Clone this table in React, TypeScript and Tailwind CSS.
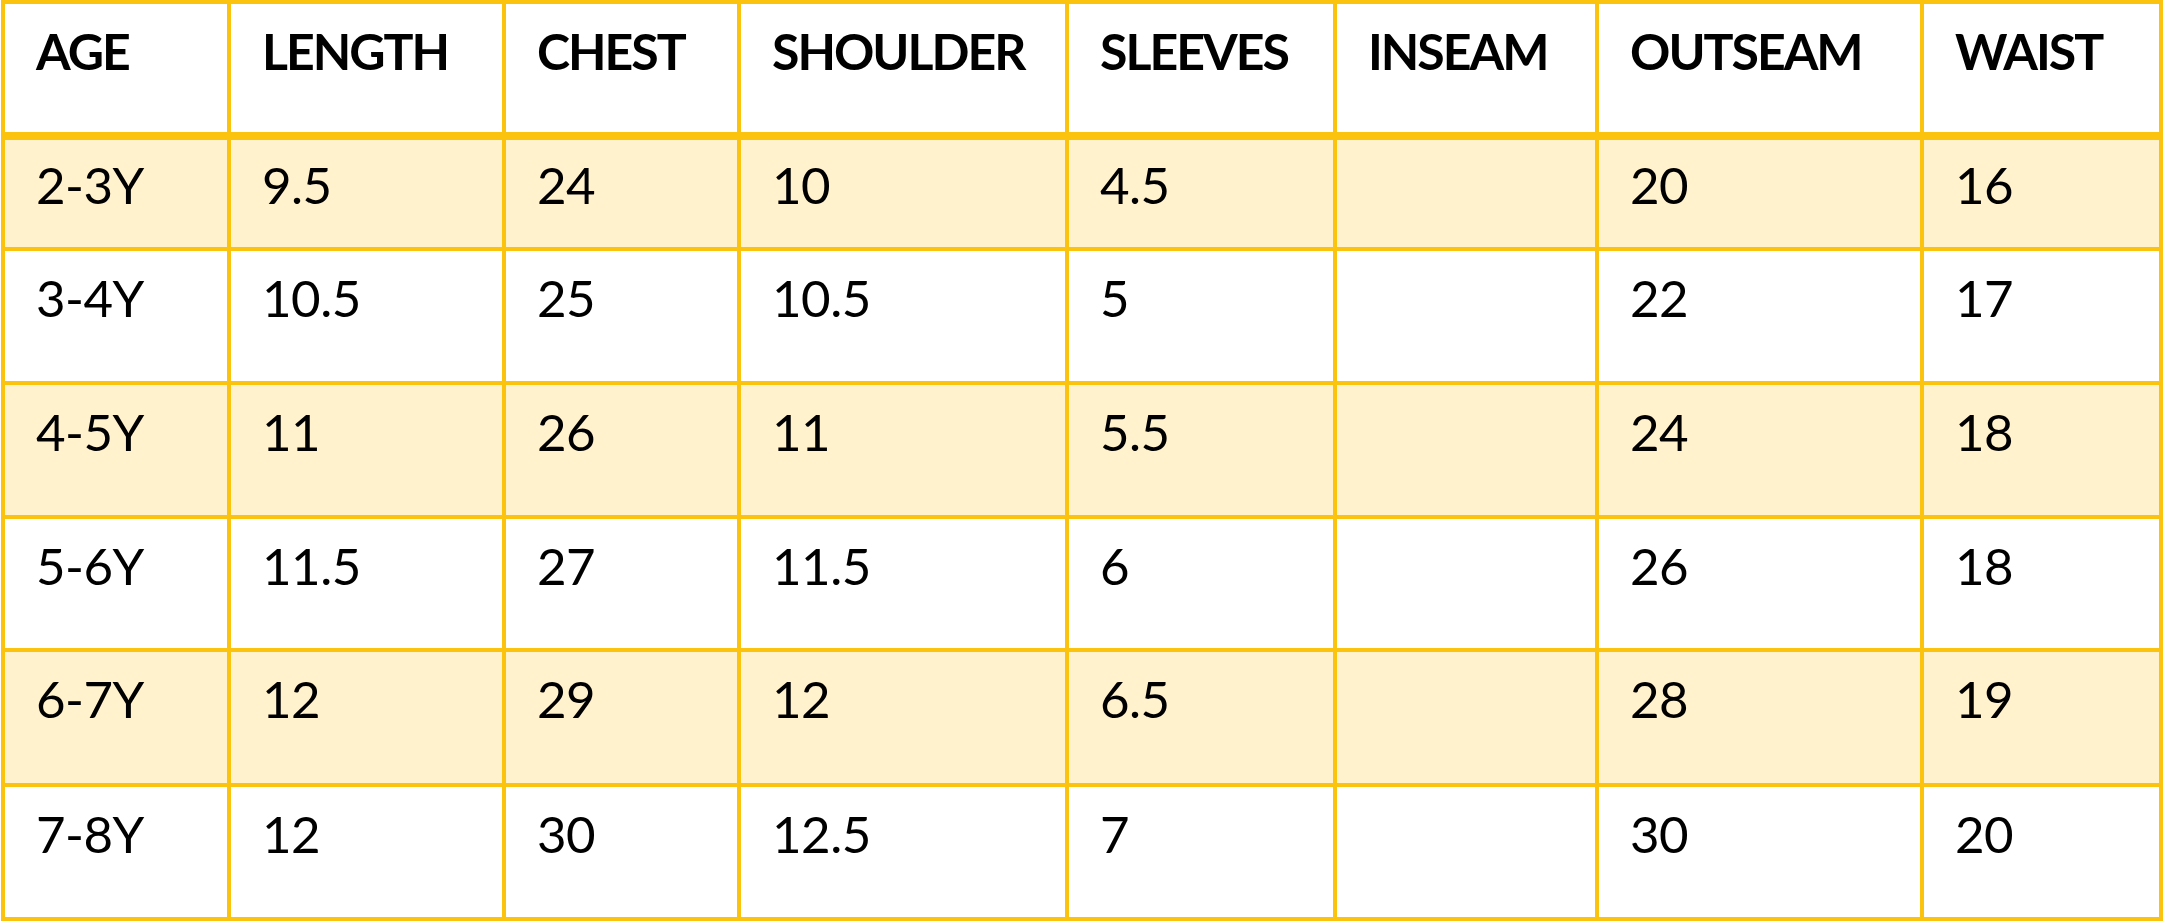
import React from "react";

const headers = ["AGE", "LENGTH", "CHEST", "SHOULDER", "SLEEVES", "INSEAM", "OUTSEAM", "WAIST"];
const rows = [
  ["2-3Y", "9.5", "24", "10", "4.5", "", "20", "16"],
  ["3-4Y", "10.5", "25", "10.5", "5", "", "22", "17"],
  ["4-5Y", "11", "26", "11", "5.5", "", "24", "18"],
  ["5-6Y", "11.5", "27", "11.5", "6", "", "26", "18"],
  ["6-7Y", "12", "29", "12", "6.5", "", "28", "19"],
  ["7-8Y", "12", "30", "12.5", "7", "", "30", "20"],
];

export default function App() {
  return (
    <div className="w-[2169px] h-[924px] bg-white" style={{ fontFamily: "Lato, 'Open Sans', sans-serif" }}>
      <div className="ml-[1px] w-[2162px] grid grid-cols-[222px_271px_231px_324px_264px_258px_321px_235px] grid-rows-[132px_107px_130px_130px_129px_131px_130px] gap-[4px] p-[4px] bg-[#FCC30E]">
        {headers.map((h) => (
          <div
            key={h}
            className="bg-white border-b-[4px] border-[#FCC30E] pl-[31px] pt-[17px] text-[50px] leading-[60px] font-bold text-black tracking-[-2px]"
          >
            {h}
          </div>
        ))}
        {rows.map((r, i) =>
          r.map((c, j) => (
            <div
              key={`${i}-${j}`}
              className={`${i % 2 === 0 ? "bg-[#FFF2CC]" : "bg-white"} ${i === 0 ? "pt-[15px]" : "pt-[17px]"} pl-[31px] text-[51px] leading-[60px] text-black tracking-[-0.5px]`}
            >
              {c}
            </div>
          ))
        )}
      </div>
    </div>
  );
}
